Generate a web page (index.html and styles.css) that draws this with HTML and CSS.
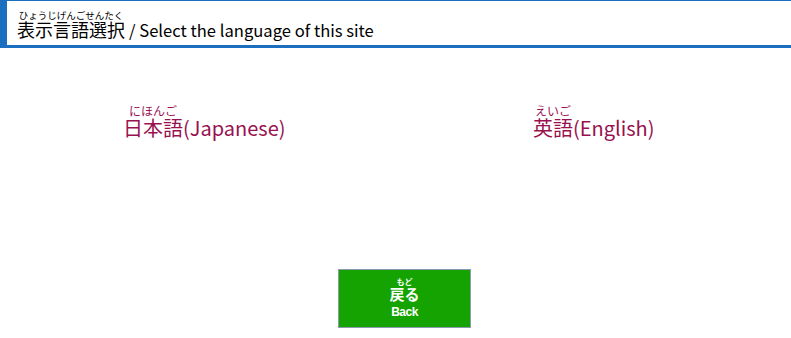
FILE: index.html
```html
<!DOCTYPE html>
<html lang="ja">
<head>
    <meta charset="UTF-8">
    <title>表示言語選択</title>
    <link rel="stylesheet" href="styles.css">
</head>
<body>
    <!-- 見出し -->
    <div class="page-title">
        <h1><ruby>表示言語選択<rt>ひょうじげんごせんたく</rt></ruby> <span class="title-en">/ Select the language of this site</span></h1>
    </div>

    <!-- 言語リスト -->
    <ul class="lang-list">
        <li><a href="#"><ruby>日本語<rt>にほんご</rt></ruby>(Japanese)</a></li>
        <li><a href="#"><ruby>英語<rt>えいご</rt></ruby>(English)</a></li>
    </ul>

    <!-- 戻るボタン -->
    <div class="back-area">
        <a class="back-button" href="#">
            <span class="back-ja"><ruby>戻る<rt>もど</rt></ruby></span>
            <span class="back-en">Back</span>
        </a>
    </div>
</body>
</html>
```

FILE: styles.css
```css
/* 全体 */
body {
    margin: 0;
    font-family: "Noto Sans CJK JP", "Liberation Sans", sans-serif;
    background-color: #fff;
    color: #000;
}

ruby {
    ruby-align: center;
}

/* 見出し */
.page-title {
    border-top: 1px solid #1a6fc0;
    border-left: 7px solid #1a6fc0;
    border-bottom: 3px solid #1a6fc0;
    box-sizing: border-box;
    height: 48px;
    padding: 9px 0 0 10px;
}

.page-title h1 {
    margin: 0;
    font-size: 18px;
    font-weight: normal;
    line-height: 35px;
}

.title-en {
    font-size: 16.6px;
}

.page-title rt {
    font-size: 9.5px;
}

/* 言語リスト */
.lang-list {
    list-style: none;
    margin: 0;
    padding: 57px 0 0 123px;
    display: grid;
    grid-template-columns: 410px 1fr;
    height: 164px;
    box-sizing: border-box;
}

.lang-list a {
    color: #99114f;
    text-decoration: none;
    font-size: 20px;
    line-height: 30px;
}

.lang-list rt {
    font-size: 12px;
}

/* 戻るボタン */
.back-area {
    padding: 57px 0 0 338px;
}

.back-button {
    display: flex;
    flex-direction: column;
    align-items: center;
    justify-content: center;
    width: 131px;
    height: 57px;
    background-color: #14a300;
    border: 1px solid #8a9ab0;
    color: #fff;
    text-decoration: none;
    font-weight: bold;
    font-family: "Liberation Sans", "Noto Sans CJK JP", sans-serif;
}

.back-ja {
    font-size: 15px;
    line-height: 18px;
}

.back-ja rt {
    font-size: 8px;
}

.back-en {
    font-size: 12px;
    line-height: 16px;
    letter-spacing: -0.5px;
}
```
